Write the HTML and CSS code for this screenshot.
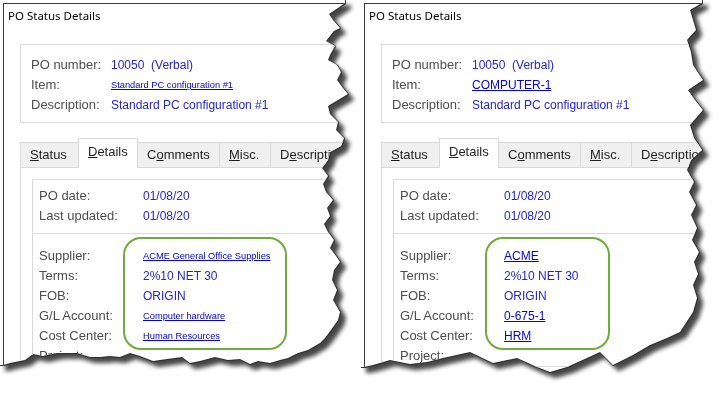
FILE: index.html
```html
<!DOCTYPE html>
<html lang="en">
<head>
    <meta charset="UTF-8">
    <meta name="viewport" content="width=device-width, initial-scale=1.0">
    <title>PO Status Details</title>
    <link rel="stylesheet" href="styles.css">
</head>
<body>
    <div class="shot">
        <!-- Before: small link text -->
        <div class="torn">
            <div class="sheet sheet-a">
                <div class="window">
                    <div class="title">PO Status Details</div>

                    <div class="group head">
                        <div class="row"><span class="label">PO number:</span><span class="value">10050&nbsp;&nbsp;(Verbal)</span></div>
                        <div class="row"><span class="label">Item:</span><a class="link small" href="#">Standard PC configuration #1</a></div>
                        <div class="row"><span class="label">Description:</span><span class="value">Standard PC configuration #1</span></div>
                    </div>

                    <div class="tabs">
                        <div class="tab tab-status"><u>S</u>tatus</div>
                        <div class="tab tab-details active"><u>D</u>etails</div>
                        <div class="tab tab-comments">C<u>o</u>mments</div>
                        <div class="tab tab-misc"><u>M</u>isc.</div>
                        <div class="tab tab-desc">D<u>e</u>scription</div>
                    </div>

                    <div class="tab-panel">
                        <div class="group inner">
                            <div class="section dates">
                                <div class="row"><span class="label wide">PO date:</span><span class="value">01/08/20</span></div>
                                <div class="row"><span class="label wide">Last updated:</span><span class="value">01/08/20</span></div>
                            </div>
                            <div class="section vendor">
                                <div class="row"><span class="label wide">Supplier:</span><a class="link small" href="#">ACME General Office Supplies</a></div>
                                <div class="row"><span class="label wide">Terms:</span><span class="value">2%10 NET 30</span></div>
                                <div class="row"><span class="label wide">FOB:</span><span class="value">ORIGIN</span></div>
                                <div class="row"><span class="label wide">G/L Account:</span><a class="link small" href="#">Computer hardware</a></div>
                                <div class="row"><span class="label wide">Cost Center:</span><a class="link small" href="#">Human Resources</a></div>
                                <div class="row"><span class="label wide">Project:</span></div>
                                <div class="highlight highlight-a"></div>
                            </div>
                        </div>
                    </div>
                </div>
            </div>
        </div>

        <!-- After: codes as links -->
        <div class="torn">
            <div class="sheet sheet-b">
                <div class="window">
                    <div class="title">PO Status Details</div>

                    <div class="group head">
                        <div class="row"><span class="label">PO number:</span><span class="value">10050&nbsp;&nbsp;(Verbal)</span></div>
                        <div class="row"><span class="label">Item:</span><a class="link" href="#">COMPUTER-1</a></div>
                        <div class="row"><span class="label">Description:</span><span class="value">Standard PC configuration #1</span></div>
                    </div>

                    <div class="tabs">
                        <div class="tab tab-status"><u>S</u>tatus</div>
                        <div class="tab tab-details active"><u>D</u>etails</div>
                        <div class="tab tab-comments">C<u>o</u>mments</div>
                        <div class="tab tab-misc"><u>M</u>isc.</div>
                        <div class="tab tab-desc">D<u>e</u>scription</div>
                    </div>

                    <div class="tab-panel">
                        <div class="group inner">
                            <div class="section dates">
                                <div class="row"><span class="label wide">PO date:</span><span class="value">01/08/20</span></div>
                                <div class="row"><span class="label wide">Last updated:</span><span class="value">01/08/20</span></div>
                            </div>
                            <div class="section vendor">
                                <div class="row"><span class="label wide">Supplier:</span><a class="link" href="#">ACME</a></div>
                                <div class="row"><span class="label wide">Terms:</span><span class="value">2%10 NET 30</span></div>
                                <div class="row"><span class="label wide">FOB:</span><span class="value">ORIGIN</span></div>
                                <div class="row"><span class="label wide">G/L Account:</span><a class="link" href="#">0-675-1</a></div>
                                <div class="row"><span class="label wide">Cost Center:</span><a class="link" href="#">HRM</a></div>
                                <div class="row"><span class="label wide">Project:</span></div>
                                <div class="highlight highlight-b"></div>
                            </div>
                        </div>
                    </div>
                </div>
            </div>
        </div>
    </div>
</body>
</html>
```

FILE: styles.css
```css
body {
    margin: 0;
    background-color: white;
    font-family: "Liberation Sans", Arial, sans-serif;
}

.shot {
    display: flex;
    gap: 11px;
    width: 725px;
    height: 399px;
    overflow: hidden;
}

/* torn paper: shadow on the wrapper, jagged clip on the sheet */
.torn {
    width: 350px;
    height: 390px;
    flex-shrink: 0;
    filter: drop-shadow(1px 0 0 #333) drop-shadow(0 1px 0 #333) drop-shadow(5px 5px 2px rgba(0,0,0,0.72));
}

.sheet {
    width: 100%;
    height: 100%;
    background-color: white;
    padding: 3px 0 0 3px;
    box-sizing: border-box;
    overflow: hidden;
}

.sheet-a {
    clip-path: polygon(0 0, 345px 0, 345px 3px, 338px 8px, 329px 14px, 333px 20px, 340px 28px, 334px 31px, 330px 36px, 326px 41px, 335px 46px, 330px 55px, 328px 60px, 337px 65px, 341px 72px, 337px 80px, 343px 88px, 348px 94px, 338px 100px, 328px 106px, 330px 114px, 338px 122px, 336px 130px, 344px 138px, 341px 146px, 330px 152px, 328px 160px, 322px 168px, 328px 176px, 323px 184px, 326px 192px, 333px 200px, 327px 208px, 330px 216px, 324px 224px, 328px 232px, 334px 240px, 330px 248px, 336px 256px, 340px 262px, 334px 270px, 332px 280px, 337px 290px, 333px 300px, 340px 312px, 338px 320px, 331px 330px, 325px 338px, 320px 343px, 308px 350px, 298px 353px, 288px 358px, 280px 360px, 270px 363px, 258px 361px, 250px 364px, 240px 359px, 228px 360px, 215px 357px, 200px 361px, 190px 363px, 182px 357px, 167px 359px, 153px 361px, 140px 356px, 130px 353px, 120px 357px, 110px 356px, 100px 357px, 90px 357px, 77px 353px, 57px 353px, 43px 356px, 33px 354px, 25px 360px, 10px 363px, 3px 365px, 0 365px);
}

.sheet-b {
    clip-path: polygon(0 0, 341px 0, 341px 3px, 329px 10px, 332px 20px, 335px 30px, 326px 40px, 330px 52px, 332px 65px, 342px 80px, 327px 90px, 334px 100px, 342px 110px, 329px 125px, 333px 138px, 341px 150px, 330px 160px, 326px 170px, 333px 182px, 328px 192px, 335px 205px, 330px 215px, 336px 228px, 331px 240px, 338px 252px, 333px 262px, 337px 274px, 332px 285px, 336px 298px, 332px 312px, 319px 332px, 306px 338px, 289px 345px, 272px 355px, 252px 365px, 239px 352px, 226px 358px, 206px 367px, 189px 372px, 176px 367px, 156px 358px, 132px 363px, 109px 352px, 82px 358px, 66px 362px, 49px 364px, 29px 360px, 12px 365px, 3px 367px, 0 367px);
}

.window {
    width: 400px;
    height: 420px;
    border-left: 1px solid #3a3a3a;
    border-top: 1px solid #3a3a3a;
}

.title {
    height: 24px;
    line-height: 24px;
    padding-left: 4px;
    font-family: "Noto Sans", sans-serif;
    font-size: 11.5px;
    color: black;
}

.group {
    border: 1px solid #dadada;
}

.head {
    margin: 16px 0 0 16px;
    padding: 10px 0 7px 10px;
}

.row {
    display: flex;
    height: 20px;
    line-height: 20px;
    white-space: nowrap;
}

.label {
    width: 80px;
    flex-shrink: 0;
    font-size: 13px;
    color: #4d4d4d;
}

.label.wide {
    width: 104px;
}

.value {
    font-size: 12px;
    color: #2323dc;
}

.link {
    font-size: 12px;
    color: #0000ee;
    text-decoration: underline;
}

.link.small {
    font-size: 9.3px;
}

.tabs {
    display: flex;
    align-items: flex-end;
    height: 29px;
    margin: 15px 0 0 16px;
    position: relative;
    z-index: 1;
}

.tab {
    height: 25px;
    line-height: 23px;
    box-sizing: border-box;
    padding-left: 9px;
    font-size: 13px;
    color: #1e1e1e;
    background-color: #f0f0f0;
    border: 1px solid #d9d9d9;
    border-bottom: none;
    margin-left: -1px;
    white-space: nowrap;
}

.tab:first-child {
    margin-left: 0;
}

.tab.active {
    height: 30px;
    margin-bottom: -1px;
    padding-top: 2px;
    line-height: 22px;
    background-color: white;
}

.tab-status { width: 59px; }
.tab-details { width: 60px; }
.tab-comments { width: 83px; }
.tab-misc { width: 52px; }
.tab-desc { width: 100px; }

.tab-panel {
    margin-left: 16px;
    border-left: 1px solid #d9d9d9;
    border-top: 1px solid #d9d9d9;
    padding: 11px 0 0 11px;
}

.inner {
    border-right: none;
}

.dates {
    padding: 6px 0 7px 6px;
    border-bottom: 1px solid #dadada;
}

.vendor {
    position: relative;
    padding: 12px 0 0 6px;
}

/* green callout drawn over the values */
.highlight {
    position: absolute;
    top: 3px;
    height: 113px;
    box-sizing: border-box;
    border: 2px solid #6fab3e;
    border-radius: 18px;
}

.highlight-a {
    left: 90px;
    width: 164px;
}

.highlight-b {
    left: 91px;
    width: 125px;
}
```
